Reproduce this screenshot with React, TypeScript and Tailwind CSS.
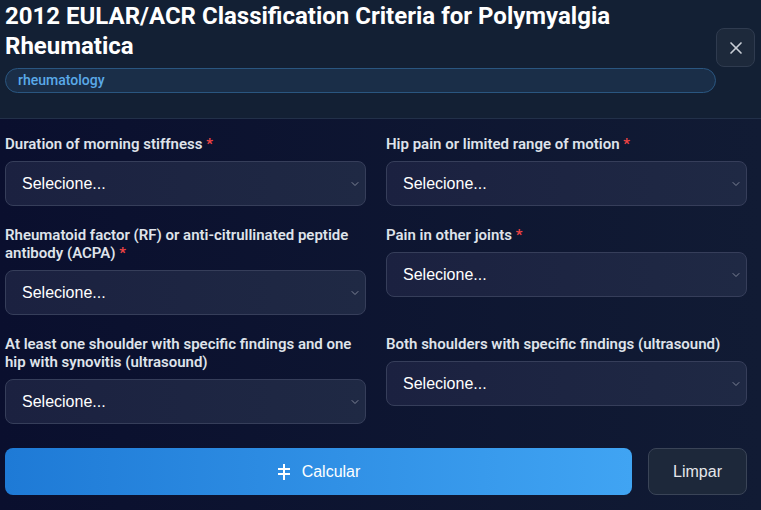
import { X, ChevronDown } from "lucide-react";

const fields = [
  { label: "Duration of morning stiffness", required: true },
  { label: "Hip pain or limited range of motion", required: true },
  { label: "Rheumatoid factor (RF) or anti-citrullinated peptide antibody (ACPA)", required: true },
  { label: "Pain in other joints", required: true },
  { label: "At least one shoulder with specific findings and one hip with synovitis (ultrasound)", required: false },
  { label: "Both shoulders with specific findings (ultrasound)", required: false },
];

function SelectField({ label, required }: { label: string; required: boolean }) {
  return (
    <div className="flex flex-col gap-2">
      <label className="text-[15px] leading-[18px] font-semibold text-[#dfe3ea]">
        {label}
        {required && <span className="text-[#ef4444]"> *</span>}
      </label>
      <div className="relative">
        <select
          defaultValue=""
          className="w-full h-[45px] appearance-none rounded-lg border border-[#363e5a] bg-gradient-to-r from-[#1b2140] to-[#1f2944] pl-4 pr-8 text-[16px] text-white outline-none"
          style={{ fontFamily: '"Liberation Sans", Arial, sans-serif' }}
        >
          <option value="">Selecione...</option>
        </select>
        <ChevronDown
          size={12}
          strokeWidth={2}
          className="pointer-events-none absolute right-[5px] top-1/2 -translate-y-1/2 text-[#7d8396]"
        />
      </div>
    </div>
  );
}

export default function App() {
  return (
    <div
      className="w-[761px] h-[510px] overflow-hidden bg-gradient-to-r from-[#0a0f2e] to-[#111b34]"
      style={{ fontFamily: 'Roboto, "Noto Sans", sans-serif' }}
    >
      <div className="h-[119px] bg-[#132034] border-b border-[#223049] flex items-start pl-[5px] pr-[6px]">
        <div className="flex-1 flex flex-col">
          <h2 className="text-[24px] leading-[30px] font-bold text-white pt-px">
            2012 EULAR/ACR Classification Criteria for Polymyalgia
            <br />
            Rheumatica
          </h2>
          <span className="mt-[7px] h-[25px] flex items-center rounded-full border border-[#2a5680] bg-[#1a2e48] px-3 text-[14px] font-medium text-[#5aaae8]">
            rheumatology
          </span>
        </div>
        <button className="mt-[28px] w-[39px] h-[39px] flex items-center justify-center rounded-lg border border-[#2f3b4f] bg-[#1d293b] text-[#c9ced6]">
          <X size={20} strokeWidth={2} />
        </button>
      </div>

      <div className="pl-[5px] pr-[14px] pt-[16px]">
        <div className="grid grid-cols-2 gap-x-5 gap-y-5 items-start">
          {fields.map((f) => (
            <SelectField key={f.label} label={f.label} required={f.required} />
          ))}
        </div>

        <div className="mt-6 flex gap-4">
          <button
            className="flex-1 h-[47px] rounded-lg bg-gradient-to-r from-[#1e7ad6] to-[#40a4f3] text-white text-[16px] flex items-center justify-center gap-[11px]"
            style={{ fontFamily: '"Liberation Sans", Arial, sans-serif' }}
          >
            <svg width="14" height="18" viewBox="0 0 14 18" fill="none" stroke="currentColor" strokeWidth="2">
              <path d="M7 1v16M1 6h12M1 11h12" />
            </svg>
            Calcular
          </button>
          <button
            className="w-[99px] h-[47px] rounded-lg border border-[#3a4457] bg-[#1d283a] text-[#e5e7eb] text-[16px]"
            style={{ fontFamily: '"Liberation Sans", Arial, sans-serif' }}
          >
            Limpar
          </button>
        </div>
      </div>
    </div>
  );
}
